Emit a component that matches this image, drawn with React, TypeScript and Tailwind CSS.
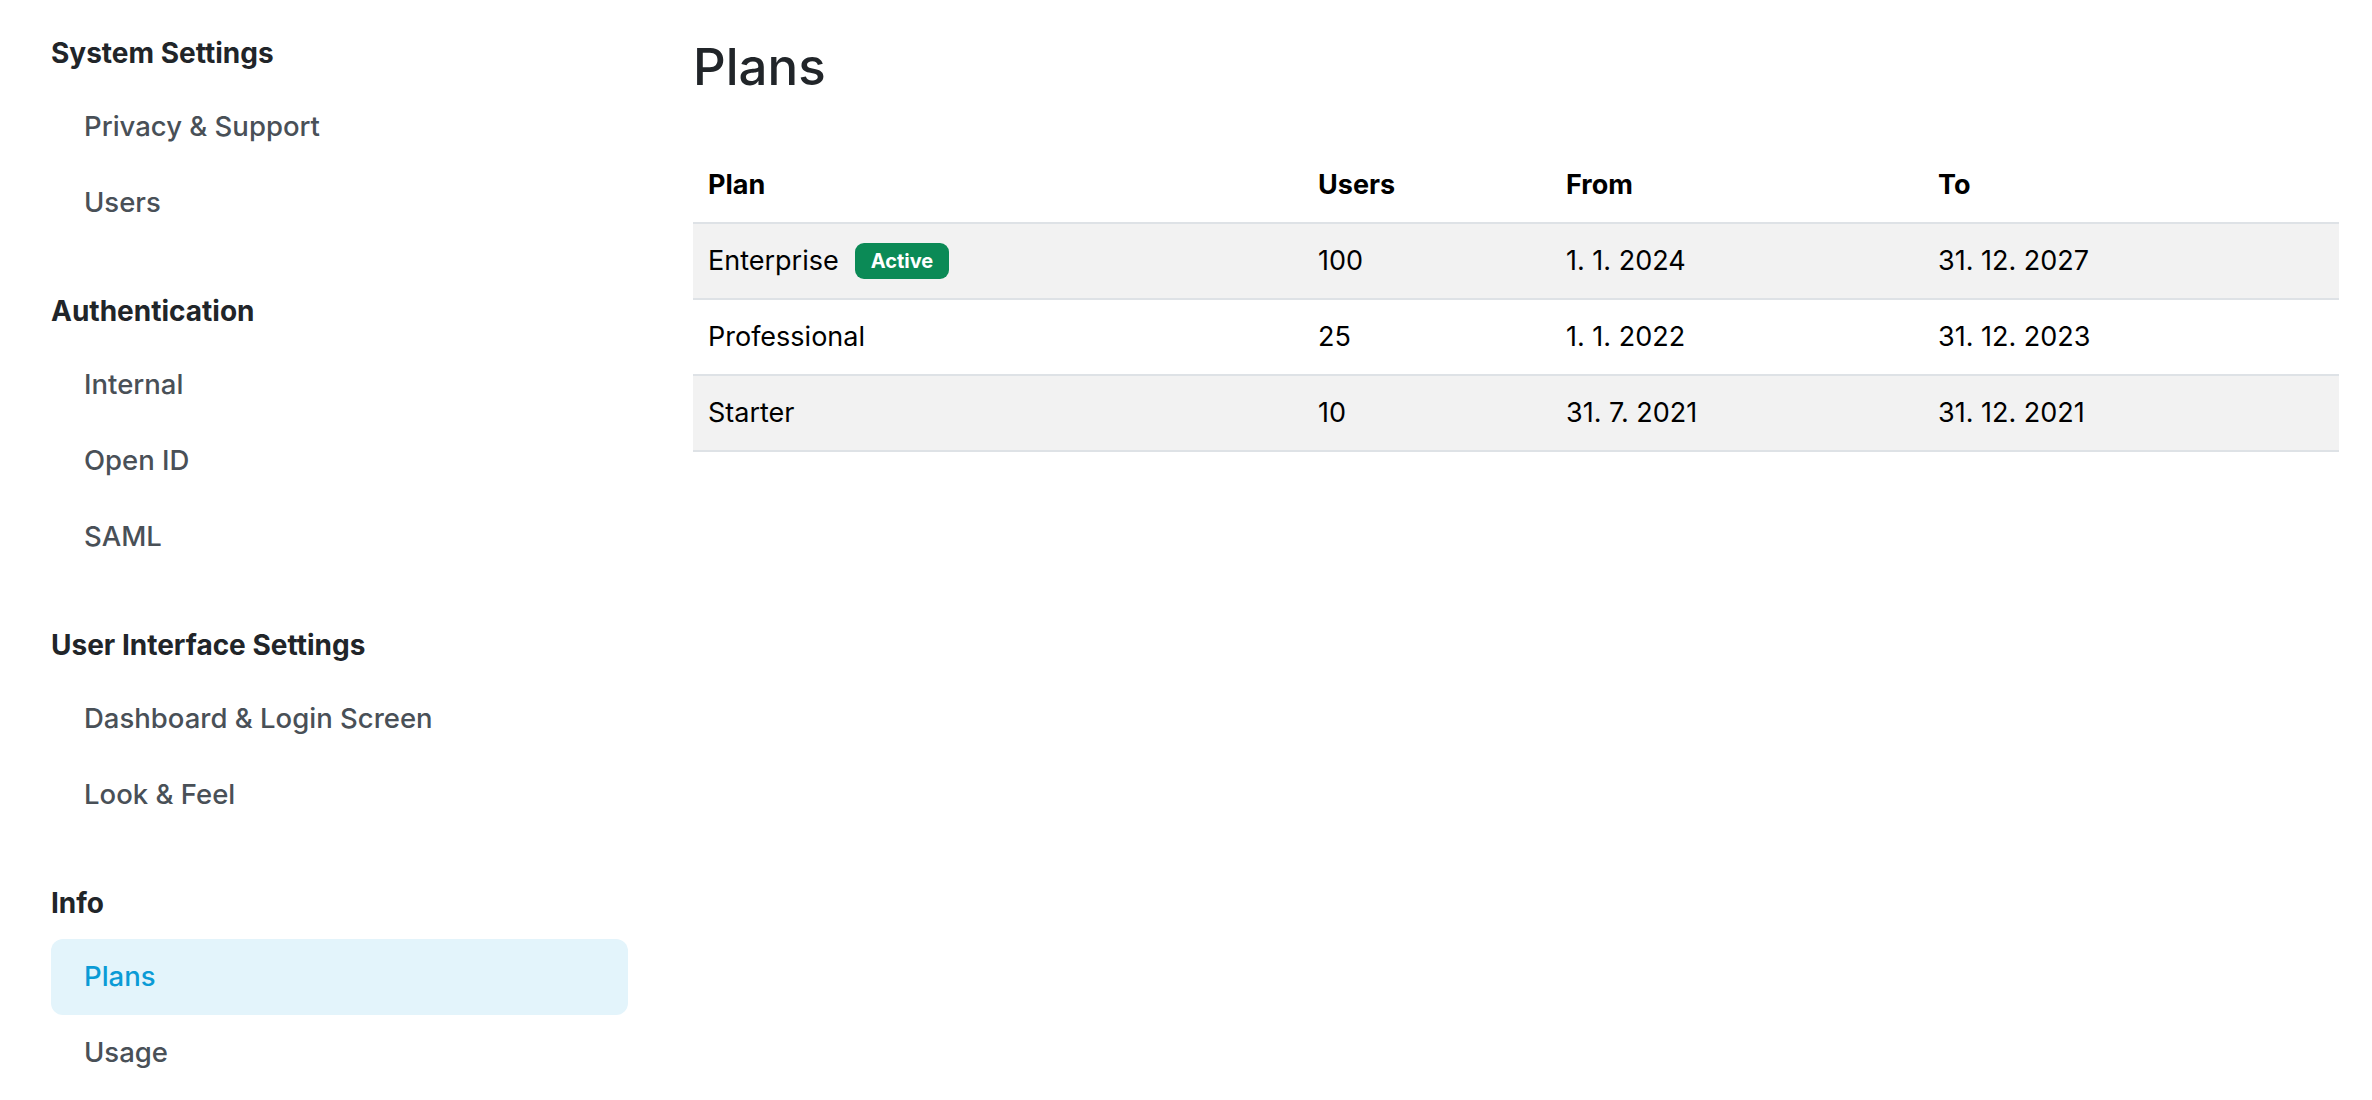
import React from "react"

type NavSection = {
    title: string
    items: string[]
}

const sections: NavSection[] = [
    { title: "System Settings", items: ["Privacy & Support", "Users"] },
    { title: "Authentication", items: ["Internal", "Open ID", "SAML"] },
    { title: "User Interface Settings", items: ["Dashboard & Login Screen", "Look & Feel"] },
    { title: "Info", items: ["Plans", "Usage"] },
]

const plans = [
    { name: "Enterprise", active: true, users: "100", from: "1. 1. 2024", to: "31. 12. 2027" },
    { name: "Professional", active: false, users: "25", from: "1. 1. 2022", to: "31. 12. 2023" },
    { name: "Starter", active: false, users: "10", from: "31. 7. 2021", to: "31. 12. 2021" },
]

const ACTIVE_ITEM = "Plans"

function Sidebar() {
    return (
        <aside className="ml-[51px] w-[577px] shrink-0 pt-[35px]">
            {sections.map((section, i) => (
                <div key={section.title} className={i > 0 ? "mt-[52px]" : ""}>
                    <h6 className="mb-[18px] text-[28px] leading-[36px] font-bold text-[#212529]">
                        {section.title}
                    </h6>
                    <ul>
                        {section.items.map((item) => (
                            <li key={item}>
                                <a
                                    href="#"
                                    className={
                                        item === ACTIVE_ITEM
                                            ? "flex h-[76px] items-center rounded-[12px] bg-[#e3f4fb] px-[33px] text-[27.5px] font-medium text-[#0a9bd6]"
                                            : "flex h-[76px] items-center rounded-[12px] px-[33px] text-[27.5px] font-medium text-[#495057]"
                                    }
                                >
                                    {item}
                                </a>
                            </li>
                        ))}
                    </ul>
                </div>
            ))}
        </aside>
    )
}

function PlansTable() {
    const cols = "grid grid-cols-[610px_248px_372px_416px] items-center"

    return (
        <div className="text-[27px] text-black">
            <div className={`${cols} h-[76px] border-b-2 border-[#dee2e6] font-bold`}>
                <div className="px-[15px]">Plan</div>
                <div className="px-[15px]">Users</div>
                <div className="px-[15px]">From</div>
                <div className="px-[15px]">To</div>
            </div>
            {plans.map((plan, i) => (
                <div
                    key={plan.name}
                    className={`${cols} h-[76px] border-b-2 border-[#dee2e6] ${i % 2 === 0 ? "bg-[#f2f2f2]" : "bg-white"}`}
                >
                    <div className="flex items-center gap-[16px] px-[15px]">
                        <span>{plan.name}</span>
                        {plan.active && (
                            <span className="flex h-[36px] items-center rounded-[9px] bg-[#0b8a56] px-[16px] text-[20px] font-bold text-white">
                                Active
                            </span>
                        )}
                    </div>
                    <div className="px-[15px]">{plan.users}</div>
                    <div className="px-[15px]">{plan.from}</div>
                    <div className="px-[15px]">{plan.to}</div>
                </div>
            ))}
        </div>
    )
}

export default function App() {
    return (
        <div className="flex min-h-screen bg-white font-['Inter',sans-serif] antialiased">
            <Sidebar />
            <main className="ml-[65px] w-[1646px] pt-[39px]">
                <h3 className="mb-[53px] text-[51px] leading-[56px] font-medium text-[#212529]">Plans</h3>
                <PlansTable />
            </main>
        </div>
    )
}
